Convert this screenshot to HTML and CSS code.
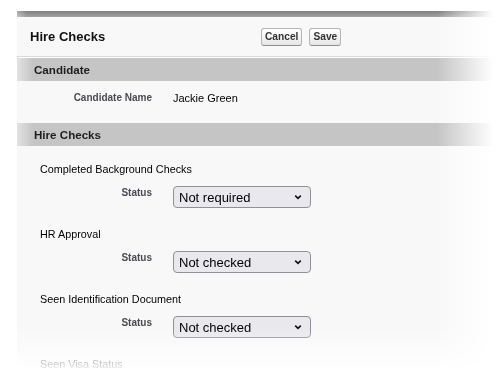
FILE: index.html
```html
<!DOCTYPE html>
<html>
<head>
<meta charset="utf-8">
<link rel="stylesheet" href="styles.css">
</head>
<body>
<div class="panel">
  <div class="topbar"></div>
  <div class="header">
    <h2 class="title">Hire Checks</h2>
    <div class="buttons">
      <button class="btn">Cancel</button>
      <button class="btn">Save</button>
    </div>
  </div>
  <div class="section-head">Candidate</div>
  <div class="candidate">
    <div class="row">
      <div class="label">Candidate Name</div>
      <div class="value">Jackie Green</div>
    </div>
  </div>
  <div class="section-head">Hire Checks</div>
  <div class="fields">
    <div class="group">
      <div class="group-title">Completed Background Checks</div>
      <div class="row field">
        <div class="label">Status</div>
        <select class="sel"><option>Not required</option><option>Not checked</option><option>Checked</option></select>
      </div>
    </div>
    <div class="group">
      <div class="group-title">HR Approval</div>
      <div class="row field">
        <div class="label">Status</div>
        <select class="sel"><option>Not checked</option><option>Not required</option><option>Checked</option></select>
      </div>
    </div>
    <div class="group">
      <div class="group-title">Seen Identification Document</div>
      <div class="row field">
        <div class="label">Status</div>
        <select class="sel"><option>Not checked</option><option>Not required</option><option>Checked</option></select>
      </div>
    </div>
    <div class="group">
      <div class="group-title">Seen Visa Status</div>
    </div>
  </div>
</div>
</body>
</html>
```

FILE: styles.css
```css
html, body {
  margin: 0;
  padding: 0;
  background: #ffffff;
  overflow: hidden;
  height: 368px;
}

.panel {
  margin: 11px 0 0 17px;
  width: 479px;
  height: 357px;
  overflow: hidden;
  background: #f8f8f8;
  font-family: "Liberation Sans", Arial, sans-serif;
  color: #000;
  -webkit-mask-image:
    linear-gradient(to right, #000 420px, transparent 476px),
    linear-gradient(to bottom, #000 318px, transparent 362px);
  -webkit-mask-composite: source-in;
  mask-image:
    linear-gradient(to right, #000 420px, transparent 476px),
    linear-gradient(to bottom, #000 318px, transparent 362px);
  mask-composite: intersect;
}

.topbar {
  height: 6px;
  background: linear-gradient(to right, rgba(255,255,255,0.35), rgba(255,255,255,0) 10px),
              linear-gradient(to bottom, #7f7f7f, #a3a3a3);
}

.header {
  height: 39px;
  display: flex;
  align-items: center;
  padding-left: 13px;
  border-bottom: 1px solid #dadada;
  box-shadow: 0 1px 0 #ffffff;
  margin-bottom: 1px;
}

.title {
  margin: 0;
  width: 231px;
  font-size: 13px;
  font-weight: bold;
  color: #111;
}

.buttons {
  display: flex;
  gap: 7px;
  margin-top: 1px;
}

.btn {
  height: 18px;
  padding: 0 3px;
  font-family: "Liberation Sans", Arial, sans-serif;
  font-size: 10.2px;
  font-weight: bold;
  color: #333;
  background: linear-gradient(#ffffff, #f1f1f1 60%, #e6e6e6);
  border: 1px solid #b5b5b5;
  border-bottom-color: #8f8f8f;
  border-radius: 3px;
  line-height: 16px;
}

.section-head {
  height: 23px;
  display: flex;
  align-items: center;
  padding-left: 17px;
  font-size: 11.6px;
  font-weight: bold;
  color: #1e1e1e;
  background: linear-gradient(to right, #e2e2e2, #c5c5c5 16px);
}

.candidate {
  padding: 10px 0 18px;
}

.row {
  display: flex;
  align-items: flex-start;
}

.label {
  width: 135px;
  text-align: right;
  font-size: 10px;
  font-weight: bold;
  color: #4a4a56;
  line-height: 14px;
  flex-shrink: 0;
}

.value {
  margin-left: 21px;
  font-size: 11px;
  line-height: 14px;
  color: #000;
}

.fields {
  display: flex;
  flex-direction: column;
  gap: 19px;
  padding-top: 16px;
}

.group-title {
  padding-left: 23px;
  font-size: 10.8px;
  line-height: 14px;
  color: #000;
}

.field {
  margin-top: 10px;
}

.sel {
  -webkit-appearance: none;
  appearance: none;
  margin: 0 0 0 21px;
  width: 138px;
  height: 22px;
  font-family: "Liberation Sans", Arial, sans-serif;
  font-size: 13px;
  color: #000;
  background-color: #e9e9ed;
  background-image: url("data:image/svg+xml,%3Csvg xmlns='http://www.w3.org/2000/svg' width='8' height='6' viewBox='0 0 8 6'%3E%3Cpath d='M1.2 1.6 L4 4.4 L6.8 1.6' fill='none' stroke='%23111' stroke-width='1.6'/%3E%3C/svg%3E");
  background-repeat: no-repeat;
  background-position: right 8px center;
  border: 1px solid #8f8f9d;
  border-radius: 4px;
  padding: 1px 20px 0 5px;
}
```
